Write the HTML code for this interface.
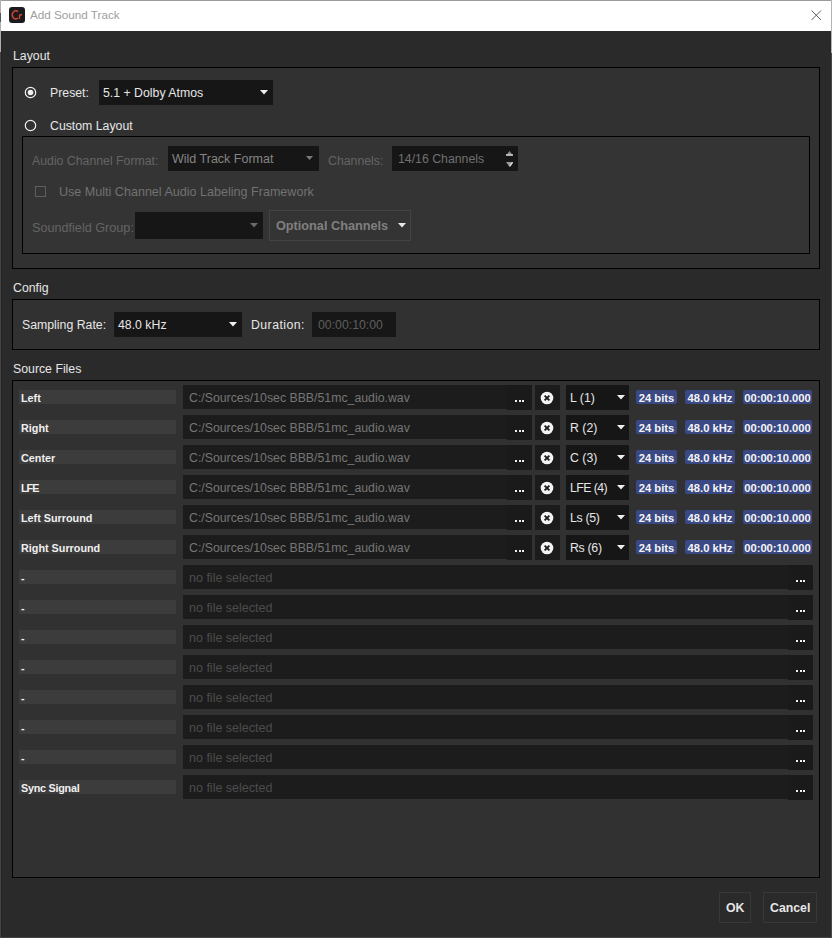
<!DOCTYPE html>
<html><head><meta charset="utf-8">
<style>
*{margin:0;padding:0;box-sizing:border-box}
html,body{width:832px;height:938px;overflow:hidden;background:#2a2a2a}
body{position:relative;font-family:"Liberation Sans",sans-serif;font-size:12.3px;color:#e6e6e6}
.a{position:absolute}
.t{position:absolute;line-height:16px;white-space:nowrap}
.b{font-weight:bold}
#win{position:absolute;left:0;top:0;width:832px;height:938px;border:1px solid #444;border-top-color:#9a9a9a;border-right-color:#4a4a4a;border-bottom-color:#444}
#title{position:absolute;left:1px;top:1px;width:830px;height:30px;background:#fff}
.grp{position:absolute;border:1px solid #000;background:#313131}
.combo{position:absolute;background:#161616}
.arrow{position:absolute;width:8px;height:4.5px;background:#f0f0f0;clip-path:polygon(0 0,100% 0,50% 100%)}
.lbl{position:absolute;left:19px;width:157px;height:14px;background:#3c3c3c}
.lbl span{position:absolute;left:2px;top:0px;font-weight:bold;font-size:10.8px;line-height:16px;color:#f0f0f0;white-space:nowrap}
.fld{position:absolute;left:183px;height:24px;background:#1c1c1c}
.fld span{position:absolute;left:6px;top:5px;line-height:16px;color:#767676;white-space:nowrap}
.dots{position:absolute;right:0;top:0;width:25px;height:25px;background:#1a1a1a}
.dots i{position:absolute;top:15px;width:2px;height:2px;background:#f0f0f0}
.xb{position:absolute;left:535px;width:25px;height:25px;background:#1c1c1c}
.ch{position:absolute;left:566px;width:63px;height:25px;background:#161616}
.ch span{position:absolute;left:4px;top:5px;line-height:16px;color:#e6e6e6}
.bd{position:absolute;height:14px;background:#3a4984;color:#f4f4f4;font-weight:bold;font-size:11.2px;line-height:16px;text-align:center;border-radius:2px;white-space:nowrap}
.dim{color:#646464}
</style></head><body>
<div id="win"></div>
<div class="a" style="left:831px;top:0;width:1px;height:53px;background:#b4b4b4"></div>
<div class="a" style="left:0;top:0;width:1px;height:52px;background:#b0b0b0"></div>
<div class="a" style="left:0;top:13px;width:1px;height:9px;background:#4c5660"></div>
<div class="a" style="left:1px;top:31px;width:1px;height:906px;background:#252525"></div>
<div id="title">
  <svg class="a" style="left:8px;top:6px" width="16" height="16" viewBox="0 0 16 16">
    <rect x="0" y="0" width="16" height="16" rx="3" fill="#1c1a1e"/>
    <path d="M9 4.7A3.5 4.1 0 1 0 9 11.1" fill="none" stroke="#d04a2e" stroke-width="1.4"/>
    <path d="M10.5 7.4V11.9M10.5 9.3Q11.1 7.5 13 7.5" fill="none" stroke="#d04a2e" stroke-width="1.3"/>
  </svg>
  <div class="t" style="left:29px;top:6px;color:#a0a0a0;font-size:11.7px">Add Sound Track</div>
  <svg class="a" style="left:809px;top:8px" width="13" height="13" viewBox="0 0 13 13"><path d="M1.5 1.5L11 11M11 1.5L1.5 11" stroke="#5e5e5e" stroke-width="1"/></svg>
</div>

<!-- Layout -->
<div class="t" style="left:13px;top:48px">Layout</div>
<div class="grp" style="left:12px;top:67px;width:808px;height:202px"></div>
<svg class="a" style="left:24px;top:86px" width="13" height="13"><circle cx="6.5" cy="6.5" r="5.2" fill="none" stroke="#f0f0f0" stroke-width="1.2"/><circle cx="6.5" cy="6.5" r="2.8" fill="#f0f0f0"/></svg>
<div class="t" style="left:50px;top:85px">Preset:</div>
<div class="combo" style="left:99px;top:80px;width:174px;height:25px"></div>
<div class="t" style="left:103px;top:85px">5.1 + Dolby Atmos</div>
<div class="arrow" style="left:260px;top:90px"></div>
<svg class="a" style="left:24px;top:119px" width="13" height="13"><circle cx="6.5" cy="6.5" r="5.2" fill="none" stroke="#f0f0f0" stroke-width="1.2"/></svg>
<div class="t" style="left:50px;top:118px">Custom Layout</div>

<div class="grp" style="left:22px;top:136px;width:788px;height:118px;background:#343434"></div>
<div class="t dim" style="left:32px;top:153px">Audio Channel Format:</div>
<div class="combo" style="left:168px;top:146px;width:151px;height:25px"></div>
<div class="t" style="left:172px;top:151px;color:#858585;font-size:12.5px">Wild Track Format</div>
<div class="arrow" style="left:306px;top:156px;width:7px;height:4px;background:#7a7a7a"></div>
<div class="t dim" style="left:328px;top:153px">Channels:</div>
<div class="combo" style="left:392px;top:146px;width:126px;height:25px"></div>
<div class="t" style="left:398px;top:151px;color:#707070">14/16 Channels</div>
<svg class="a" style="left:504px;top:149px" width="12" height="20" viewBox="0 0 12 20"><polygon points="2,6.5 5.5,2 9,6.5" fill="#8a8a8a"/><rect x="2" y="5.3" width="7" height="1.4" fill="#d8d8d8"/><polygon points="2,13 9,13 5.5,17.8" fill="#9a9a9a"/><path d="M8.6 13.4L5.7 17.4" stroke="#e8e8e8" stroke-width="1.2"/></svg>
<div class="a" style="left:35px;top:186px;width:11px;height:11px;border:1px solid #5e5e5e"></div>
<div class="t dim" style="left:59px;top:184px;color:#727272;font-size:12.57px">Use Multi Channel Audio Labeling Framework</div>
<div class="t dim" style="left:32px;top:220px;font-size:12.65px">Soundfield Group:</div>
<div class="combo" style="left:135px;top:212px;width:128px;height:27px"></div>
<div class="arrow" style="left:250px;top:223px;background:#6a6a6a"></div>
<div class="a" style="left:269px;top:210px;width:142px;height:31px;border:1px solid #444"></div>
<div class="t b" style="left:276px;top:218px;color:#808080;font-size:12.7px">Optional Channels</div>
<div class="arrow" style="left:398px;top:223px;background:#e8e8e8"></div>

<!-- Config -->
<div class="t" style="left:13px;top:280px">Config</div>
<div class="grp" style="left:12px;top:299px;width:808px;height:51px"></div>
<div class="t" style="left:22px;top:317px">Sampling Rate:</div>
<div class="combo" style="left:114px;top:312px;width:128px;height:25px"></div>
<div class="t" style="left:118px;top:317px">48.0 kHz</div>
<div class="arrow" style="left:229px;top:322px"></div>
<div class="t" style="left:251px;top:317px;letter-spacing:0.45px">Duration:</div>
<div class="combo" style="left:312px;top:312px;width:84px;height:25px;background:#171717"></div>
<div class="t" style="left:318px;top:317px;color:#5e5e5e">00:00:10:00</div>

<!-- Source files -->
<div class="t" style="left:13px;top:361px">Source Files</div>
<div class="grp" style="left:12px;top:380px;width:808px;height:498px"></div>
<div class="lbl" style="top:390px"><span style="">Left</span></div>
<div class="fld" style="top:385px;width:349px"><span>C:/Sources/10sec BBB/51mc_audio.wav</span><div class="dots"><i style="left:8.4px"></i><i style="left:11.7px"></i><i style="left:15px"></i></div></div>
<div class="xb" style="top:385px"><svg class="a" style="left:5px;top:6px" width="14" height="14" viewBox="0 0 14 14"><circle cx="7" cy="7" r="6.3" fill="#f4f4f4"/><path d="M4.6 4.6L9.4 9.4M9.4 4.6L4.6 9.4" stroke="#1c1c1c" stroke-width="1.9"/></svg></div>
<div class="ch" style="top:385px"><span style="letter-spacing:0px">L (1)</span><div class="arrow" style="left:51px;top:10px"></div></div>
<div class="bd" style="left:636px;top:390px;width:41px">24 bits</div>
<div class="bd" style="left:685px;top:390px;width:50px">48.0 kHz</div>
<div class="bd" style="left:743px;top:390px;width:69px">00:00:10.000</div>
<div class="lbl" style="top:420px"><span style="">Right</span></div>
<div class="fld" style="top:415px;width:349px"><span>C:/Sources/10sec BBB/51mc_audio.wav</span><div class="dots"><i style="left:8.4px"></i><i style="left:11.7px"></i><i style="left:15px"></i></div></div>
<div class="xb" style="top:415px"><svg class="a" style="left:5px;top:6px" width="14" height="14" viewBox="0 0 14 14"><circle cx="7" cy="7" r="6.3" fill="#f4f4f4"/><path d="M4.6 4.6L9.4 9.4M9.4 4.6L4.6 9.4" stroke="#1c1c1c" stroke-width="1.9"/></svg></div>
<div class="ch" style="top:415px"><span style="letter-spacing:0px">R (2)</span><div class="arrow" style="left:51px;top:10px"></div></div>
<div class="bd" style="left:636px;top:420px;width:41px">24 bits</div>
<div class="bd" style="left:685px;top:420px;width:50px">48.0 kHz</div>
<div class="bd" style="left:743px;top:420px;width:69px">00:00:10.000</div>
<div class="lbl" style="top:450px"><span style="">Center</span></div>
<div class="fld" style="top:445px;width:349px"><span>C:/Sources/10sec BBB/51mc_audio.wav</span><div class="dots"><i style="left:8.4px"></i><i style="left:11.7px"></i><i style="left:15px"></i></div></div>
<div class="xb" style="top:445px"><svg class="a" style="left:5px;top:6px" width="14" height="14" viewBox="0 0 14 14"><circle cx="7" cy="7" r="6.3" fill="#f4f4f4"/><path d="M4.6 4.6L9.4 9.4M9.4 4.6L4.6 9.4" stroke="#1c1c1c" stroke-width="1.9"/></svg></div>
<div class="ch" style="top:445px"><span style="letter-spacing:0px">C (3)</span><div class="arrow" style="left:51px;top:10px"></div></div>
<div class="bd" style="left:636px;top:450px;width:41px">24 bits</div>
<div class="bd" style="left:685px;top:450px;width:50px">48.0 kHz</div>
<div class="bd" style="left:743px;top:450px;width:69px">00:00:10.000</div>
<div class="lbl" style="top:480px"><span style="letter-spacing:-1px">LFE</span></div>
<div class="fld" style="top:475px;width:349px"><span>C:/Sources/10sec BBB/51mc_audio.wav</span><div class="dots"><i style="left:8.4px"></i><i style="left:11.7px"></i><i style="left:15px"></i></div></div>
<div class="xb" style="top:475px"><svg class="a" style="left:5px;top:6px" width="14" height="14" viewBox="0 0 14 14"><circle cx="7" cy="7" r="6.3" fill="#f4f4f4"/><path d="M4.6 4.6L9.4 9.4M9.4 4.6L4.6 9.4" stroke="#1c1c1c" stroke-width="1.9"/></svg></div>
<div class="ch" style="top:475px"><span style="letter-spacing:-0.55px">LFE (4)</span><div class="arrow" style="left:51px;top:10px"></div></div>
<div class="bd" style="left:636px;top:480px;width:41px">24 bits</div>
<div class="bd" style="left:685px;top:480px;width:50px">48.0 kHz</div>
<div class="bd" style="left:743px;top:480px;width:69px">00:00:10.000</div>
<div class="lbl" style="top:510px"><span style="">Left Surround</span></div>
<div class="fld" style="top:505px;width:349px"><span>C:/Sources/10sec BBB/51mc_audio.wav</span><div class="dots"><i style="left:8.4px"></i><i style="left:11.7px"></i><i style="left:15px"></i></div></div>
<div class="xb" style="top:505px"><svg class="a" style="left:5px;top:6px" width="14" height="14" viewBox="0 0 14 14"><circle cx="7" cy="7" r="6.3" fill="#f4f4f4"/><path d="M4.6 4.6L9.4 9.4M9.4 4.6L4.6 9.4" stroke="#1c1c1c" stroke-width="1.9"/></svg></div>
<div class="ch" style="top:505px"><span style="letter-spacing:-0.3px">Ls (5)</span><div class="arrow" style="left:51px;top:10px"></div></div>
<div class="bd" style="left:636px;top:510px;width:41px">24 bits</div>
<div class="bd" style="left:685px;top:510px;width:50px">48.0 kHz</div>
<div class="bd" style="left:743px;top:510px;width:69px">00:00:10.000</div>
<div class="lbl" style="top:540px"><span style="">Right Surround</span></div>
<div class="fld" style="top:535px;width:349px"><span>C:/Sources/10sec BBB/51mc_audio.wav</span><div class="dots"><i style="left:8.4px"></i><i style="left:11.7px"></i><i style="left:15px"></i></div></div>
<div class="xb" style="top:535px"><svg class="a" style="left:5px;top:6px" width="14" height="14" viewBox="0 0 14 14"><circle cx="7" cy="7" r="6.3" fill="#f4f4f4"/><path d="M4.6 4.6L9.4 9.4M9.4 4.6L4.6 9.4" stroke="#1c1c1c" stroke-width="1.9"/></svg></div>
<div class="ch" style="top:535px"><span style="letter-spacing:-0.3px">Rs (6)</span><div class="arrow" style="left:51px;top:10px"></div></div>
<div class="bd" style="left:636px;top:540px;width:41px">24 bits</div>
<div class="bd" style="left:685px;top:540px;width:50px">48.0 kHz</div>
<div class="bd" style="left:743px;top:540px;width:69px">00:00:10.000</div>
<div class="lbl" style="top:570px"><span style="">-</span></div>
<div class="fld" style="top:565px;width:630px"><span style="color:#4c4c4c;font-size:12.5px">no file selected</span><div class="dots"><i style="left:8.4px"></i><i style="left:11.7px"></i><i style="left:15px"></i></div></div>
<div class="lbl" style="top:600px"><span style="">-</span></div>
<div class="fld" style="top:595px;width:630px"><span style="color:#4c4c4c;font-size:12.5px">no file selected</span><div class="dots"><i style="left:8.4px"></i><i style="left:11.7px"></i><i style="left:15px"></i></div></div>
<div class="lbl" style="top:630px"><span style="">-</span></div>
<div class="fld" style="top:625px;width:630px"><span style="color:#4c4c4c;font-size:12.5px">no file selected</span><div class="dots"><i style="left:8.4px"></i><i style="left:11.7px"></i><i style="left:15px"></i></div></div>
<div class="lbl" style="top:660px"><span style="">-</span></div>
<div class="fld" style="top:655px;width:630px"><span style="color:#4c4c4c;font-size:12.5px">no file selected</span><div class="dots"><i style="left:8.4px"></i><i style="left:11.7px"></i><i style="left:15px"></i></div></div>
<div class="lbl" style="top:690px"><span style="">-</span></div>
<div class="fld" style="top:685px;width:630px"><span style="color:#4c4c4c;font-size:12.5px">no file selected</span><div class="dots"><i style="left:8.4px"></i><i style="left:11.7px"></i><i style="left:15px"></i></div></div>
<div class="lbl" style="top:720px"><span style="">-</span></div>
<div class="fld" style="top:715px;width:630px"><span style="color:#4c4c4c;font-size:12.5px">no file selected</span><div class="dots"><i style="left:8.4px"></i><i style="left:11.7px"></i><i style="left:15px"></i></div></div>
<div class="lbl" style="top:750px"><span style="">-</span></div>
<div class="fld" style="top:745px;width:630px"><span style="color:#4c4c4c;font-size:12.5px">no file selected</span><div class="dots"><i style="left:8.4px"></i><i style="left:11.7px"></i><i style="left:15px"></i></div></div>
<div class="lbl" style="top:780px"><span style="letter-spacing:-0.25px">Sync Signal</span></div>
<div class="fld" style="top:775px;width:630px"><span style="color:#4c4c4c;font-size:12.5px">no file selected</span><div class="dots"><i style="left:8.4px"></i><i style="left:11.7px"></i><i style="left:15px"></i></div></div>

<div class="a" style="left:719px;top:892px;width:32px;height:31px;border:1px solid #383838"></div>
<div class="t b" style="left:726px;top:900px">OK</div>
<div class="a" style="left:763px;top:892px;width:54px;height:31px;border:1px solid #383838"></div>
<div class="t b" style="left:770px;top:900px">Cancel</div>
</body></html>
